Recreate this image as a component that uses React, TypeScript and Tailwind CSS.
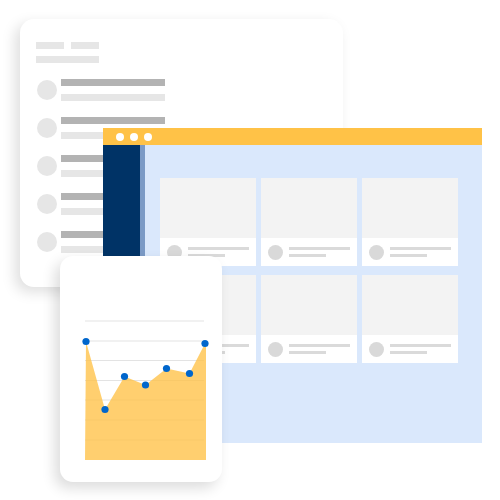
import React from 'react';

const rows = [0, 1, 2, 3, 4];
const tiles = [0, 1, 2, 3, 4, 5];

const points: [number, number][] = [
  [86, 341.5],
  [105, 409.5],
  [124.5, 376.5],
  [145.5, 385],
  [166.5, 368.5],
  [189.5, 373.5],
  [205, 343.5],
];

const gridLines = [321, 341, 360.5, 380.5, 400, 420, 440];

function ListCard() {
  return (
    <div className="absolute left-[20px] top-[19px] w-[323px] h-[268px] rounded-[14px] bg-white shadow-[-5px_5px_14px_rgba(0,0,0,0.13)] pl-[16px] pt-[23px]">
      {/* header placeholders */}
      <div className="flex gap-[7px]">
        <div className="h-[7px] w-[28px] bg-[#e6e6e6]" />
        <div className="h-[7px] w-[28px] bg-[#e6e6e6]" />
      </div>
      <div className="mt-[7px] h-[7px] w-[63px] bg-[#e6e6e6]" />

      <div className="mt-[16px] flex flex-col gap-[16px]">
        {rows.map((r) => (
          <div key={r} className="flex items-center gap-[4px]">
            <div className="ml-[1px] h-[20px] w-[20px] rounded-full bg-[#e6e6e6]" />
            <div className="flex flex-col gap-[8px]">
              <div className="h-[7px] w-[104px] bg-[#b3b3b3]" />
              <div className="h-[7px] w-[104px] bg-[#e6e6e6]" />
            </div>
          </div>
        ))}
      </div>
    </div>
  );
}

function BrowserWindow() {
  return (
    <div className="absolute left-[103px] top-[128px] w-[379px] h-[315px] flex flex-col">
      <div className="h-[17px] bg-[#ffc247] flex items-center gap-[6px] pl-[13px]">
        <div className="h-[8px] w-[8px] rounded-full bg-white" />
        <div className="h-[8px] w-[8px] rounded-full bg-white" />
        <div className="h-[8px] w-[8px] rounded-full bg-white" />
      </div>
      <div className="flex flex-1">
        <div className="w-[37px] bg-[#003366]" />
        <div className="w-[5px] bg-[#7b9ac6]" />
        <div className="flex-1 bg-[#dae8fc] pl-[15px] pt-[33px]">
          <div className="grid w-[298px] grid-cols-3 gap-x-[5px] gap-y-[9px]">
            {tiles.map((t) => (
              <div key={t} className="flex flex-col">
                <div className="h-[60px] bg-[#f3f3f3]" />
                <div className="h-[28px] bg-white flex items-center pl-[7px] gap-[6px]">
                  <div className="h-[15px] w-[15px] rounded-full bg-[#d9d9d9]" />
                  <div className="flex flex-col gap-[3.5px]">
                    <div className="h-[3px] w-[61px] bg-[#dadada]" />
                    <div className="h-[3px] w-[37px] bg-[#dadada]" />
                  </div>
                </div>
              </div>
            ))}
          </div>
        </div>
      </div>
    </div>
  );
}

function ChartCard() {
  const line = points.map(([x, y]) => `${x},${y}`).join(' ');
  const area = `85,460 ${line} 206,343.5 206,460`;
  return (
    <div className="absolute left-[60px] top-[256px] w-[162px] h-[226px] rounded-[13px] bg-white shadow-[-5px_6px_14px_rgba(0,0,0,0.14)]">
      <svg width="162" height="226" viewBox="60 256 162 226" className="block">
        {gridLines.map((y) => (
          <line key={y} x1="85" x2="204" y1={y} y2={y} stroke="#e3e3e3" strokeWidth="1" />
        ))}
        <polygon points={area} fill="#ffc247" fillOpacity="0.78" />
        {points.map(([x, y]) => (
          <circle key={x} cx={x} cy={y} r="3.6" fill="#0066cc" />
        ))}
      </svg>
    </div>
  );
}

export default function App() {
  return (
    <div className="relative w-[500px] h-[500px] overflow-hidden bg-white font-['Liberation_Sans',sans-serif]">
      <ListCard />
      <BrowserWindow />
      <ChartCard />
    </div>
  );
}
